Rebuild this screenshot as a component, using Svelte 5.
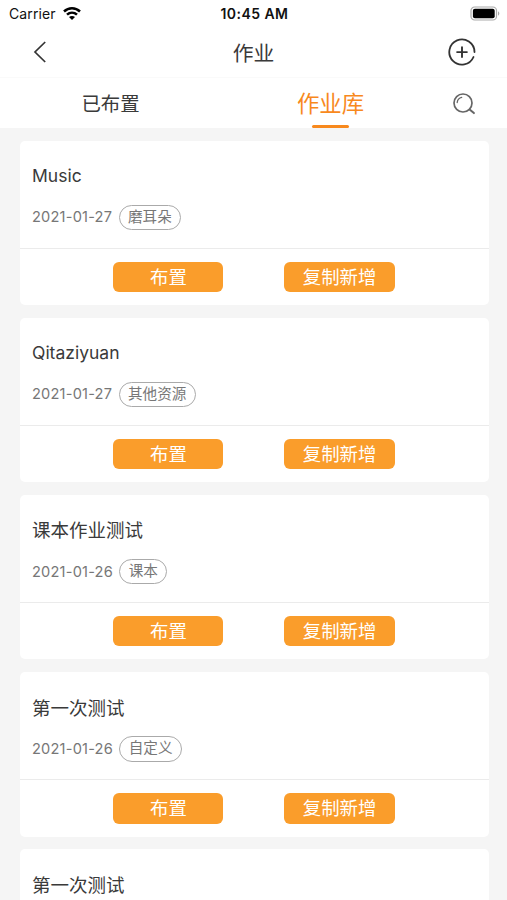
<script lang="ts">
  interface Homework {
    title: string;
    date: string;
    tag: string;
  }

  const homeworks: Homework[] = [
    { title: "Music", date: "2021-01-27", tag: "磨耳朵" },
    { title: "Qitaziyuan", date: "2021-01-27", tag: "其他资源" },
    { title: "课本作业测试", date: "2021-01-26", tag: "课本" },
    { title: "第一次测试", date: "2021-01-26", tag: "自定义" },
    { title: "第一次测试", date: "2021-01-26", tag: "自定义" },
  ];

  let activeTab = $state("library");

  const isLatin = (text: string) => /^[\x20-\x7e]+$/.test(text);
</script>

<div class="screen">
  <div class="status">
    <div class="carrier">
      <span>Carrier</span>
      <svg width="18" height="14" viewBox="0 0 18 14" aria-hidden="true">
        <g fill="none" stroke="#000" stroke-width="2.5">
          <path d="M1 4.5C5.6.2 12.4.2 17 4.5" />
          <path d="M4 7.7c2.9-2.7 7.1-2.7 10 0" />
        </g>
        <path d="M9 13 6 10c1.7-1.5 4.3-1.5 6 0z" />
      </svg>
    </div>
    <span class="clock">10:45 AM</span>
    <svg class="battery" width="31" height="16" viewBox="0 0 31 16" aria-hidden="true">
      <rect x="1" y="1" width="25.5" height="13" rx="3.6" fill="#fff" stroke="#aaa" stroke-width="1.2" />
      <rect x="2.9" y="2.8" width="21.8" height="9.4" rx="2" />
      <path d="M28 5.3c1.8.8 1.8 3.6 0 4.4z" fill="#aaa" />
    </svg>
  </div>

  <header class="navbar">
    <button type="button" class="icon-btn" aria-label="返回">
      <svg width="14" height="22" viewBox="0 0 14 22">
        <path d="M12.2 1 2 11l10.2 10" fill="none" stroke="#333" stroke-width="1.7" />
      </svg>
    </button>
    <h1>作业</h1>
    <button type="button" class="icon-btn" aria-label="新增">
      <svg width="28" height="28" viewBox="0 0 28 28">
        <g fill="none" stroke="#333" stroke-width="1.8" stroke-linecap="round">
          <path d="M26.5 14A12.6 12.6 0 1 0 25.5 19" />
          <path d="M14 9.2v9.8M9.1 14.1h9.8" stroke-width="1.9" />
        </g>
      </svg>
    </button>
  </header>

  <nav class="tabs">
    <button type="button" class="tab" data-active={activeTab === "assigned"} onclick={() => (activeTab = "assigned")}>
      <span>已布置</span>
    </button>
    <button type="button" class="tab" data-active={activeTab === "library"} onclick={() => (activeTab = "library")}>
      <span>作业库</span>
    </button>
    <button type="button" class="icon-btn search" aria-label="搜索">
      <svg width="24" height="22" viewBox="0 0 24 22">
        <g fill="none" stroke="#666" stroke-width="1.7" stroke-linecap="round">
          <circle cx="11" cy="10" r="9" />
          <path d="m17.6 16.4 4.3 3.7" stroke-width="2" />
          <path d="M5.2 9.5c.3-2.8 2-4.7 4.5-5.2" stroke-width="1.3" />
        </g>
      </svg>
    </button>
  </nav>

  <main class="list">
    {#each homeworks as item}
      <article class="card">
        <div class="info">
          <h2 class:latin={isLatin(item.title)}>{item.title}</h2>
          <div class="meta">
            <time>{item.date}</time>
            <span class="tag">{item.tag}</span>
          </div>
        </div>
        <div class="actions">
          <button type="button" class="action">布置</button>
          <button type="button" class="action">复制新增</button>
        </div>
      </article>
    {/each}
  </main>
</div>

<style>
  :global(body) {
    overflow: hidden;
    background: #f5f5f5;
  }
  .screen {
    height: 900px;
    overflow: hidden;
    background: #f5f5f5;
    color: #3a3a3a;
    font-family: Inter, "Noto Sans CJK SC", sans-serif;
  }
  button {
    padding: 0;
    border: 0;
    background: none;
    font-family: inherit;
    cursor: pointer;
  }
  svg {
    display: block;
  }
  h1,
  h2 {
    margin: 0;
    font-weight: 400;
  }
  .status {
    display: grid;
    grid-template-columns: 1fr auto 1fr;
    align-items: center;
    height: 27px;
    padding: 0 6px 0 9px;
    background: #fff;
    color: #111;
    font-size: 14px;
  }
  .carrier {
    display: flex;
    align-items: center;
    gap: 7px;
    letter-spacing: 0.1px;
  }
  .clock {
    margin-right: 1px;
    font-weight: 600;
    letter-spacing: 0.45px;
  }
  .battery {
    justify-self: end;
  }
  .navbar {
    display: flex;
    align-items: center;
    justify-content: space-between;
    height: 50px;
    padding: 0 31px 0 33px;
    background: #fff;
  }
  .navbar .icon-btn {
    display: flex;
    width: 28px;
  }
  h1 {
    padding: 3px 2px 0 0;
    font-size: 20.8px;
    line-height: 30px;
  }
  .tabs {
    display: grid;
    grid-template-columns: 221px 219px 1fr;
    height: 51px;
    box-shadow: inset 0 1px #fafafa;
    background: #fff;
  }
  .tab {
    display: flex;
    flex-direction: column;
    align-items: center;
    justify-content: flex-start;
    color: #3a3a3a;
    font-size: 19.4px;
  }
  .tab span {
    height: 48px;
    line-height: 54px;
  }
  .tab[data-active="true"] {
    color: #f8891d;
    font-size: 22.4px;
  }
  .tab[data-active="true"]::after {
    content: "";
    width: 37px;
    height: 2.5px;
    border-radius: 2px;
    background: #f8891d;
  }
  .search {
    display: flex;
    align-items: center;
    padding: 2px 0 0 12px;
  }
  .list {
    display: flex;
    flex-direction: column;
    gap: 12.6px;
    padding: 12.5px 18.5px 0 20px;
  }
  .card {
    display: flex;
    flex: none;
    flex-direction: column;
    height: 164.6px;
    border-radius: 5px;
    background: #fff;
  }
  .info {
    box-sizing: border-box;
    height: 108px;
    padding: 21.5px 12px 0;
    border-bottom: 1px solid #ebebeb;
  }
  h2 {
    font-size: 18.5px;
    line-height: 28px;
  }
  h2.latin {
    font-size: 17.5px;
  }
  .meta {
    display: flex;
    align-items: center;
    gap: 6.5px;
    margin-top: 14.5px;
    color: #777;
    font-size: 14.6px;
  }
  time {
    letter-spacing: 0.2px;
  }
  .tag {
    box-sizing: border-box;
    height: 25.5px;
    padding: 0 8.3px;
    border: 1px solid #aaa;
    border-radius: 13px;
    line-height: 23.5px;
  }
  .actions {
    display: flex;
    flex: 1;
    align-items: center;
    gap: 61px;
    padding-left: 93.3px;
  }
  .action {
    width: 110.2px;
    height: 30.6px;
    border-radius: 6px;
    background: #fa9d2b;
    color: #fff;
    font-size: 18.4px;
    line-height: 30px;
  }
</style>
